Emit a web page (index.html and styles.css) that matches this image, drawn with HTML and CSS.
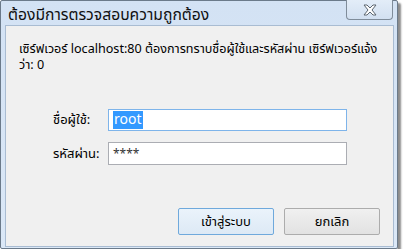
FILE: index.html
```html
<!DOCTYPE html>
<html lang="th">
<head>
    <meta charset="UTF-8">
    <title>ต้องมีการตรวจสอบความถูกต้อง</title>
    <link rel="stylesheet" href="styles.css">
</head>
<body>

    <!-- หน้าต่างขอรหัสผ่าน -->
    <div class="window">
        <div class="titlebar">
            <span class="title">ต้องมีการตรวจสอบความถูกต้อง</span>
            <button class="close-button">
                <svg width="16" height="12" viewBox="0 0 16 12">
                    <path d="M2 1 L5 1 L8 4 L11 1 L14 1 L10 6 L14 11 L11 11 L8 8 L5 11 L2 11 L6 6 Z" fill="#fff" stroke="#5c6670" stroke-width="1" stroke-linejoin="round"/>
                </svg>
            </button>
        </div>

        <div class="content">
            <p class="message">เซิร์ฟเวอร์ localhost:80 ต้องการทราบชื่อผู้ใช้และรหัสผ่าน เซิร์ฟเวอร์แจ้งว่า: 0</p>

            <div class="form">
                <div class="row">
                    <label class="label">ชื่อผู้ใช้:</label>
                    <div class="field focused"><span class="selected">root</span></div>
                </div>
                <div class="row">
                    <label class="label">รหัสผ่าน:</label>
                    <div class="field"><span class="stars">****</span></div>
                </div>
            </div>

            <div class="buttons">
                <button class="btn default">เข้าสู่ระบบ</button>
                <button class="btn">ยกเลิก</button>
            </div>
        </div>
    </div>

</body>
</html>
```

FILE: styles.css
```css
body {
    margin: 0;
    background: #ffffff;
    font-family: Tahoma, "Noto Sans Thai", "Noto Sans", sans-serif;
}

/* กรอบหน้าต่าง */
.window {
    width: 396px;
    height: 247px;
    border: 1px solid #6b7a8a;
    border-radius: 2px;
    background: linear-gradient(#d3e2f4, #dbe8f7);
    box-shadow: 3px 3px 2px rgba(0, 0, 0, 0.45);
    display: flex;
    flex-direction: column;
}

.titlebar {
    height: 24px;
    display: flex;
    align-items: flex-start;
    justify-content: space-between;
}

.title {
    font-size: 15.7px;
    color: #101010;
    padding: 2px 0 0 7px;
}

.close-button {
    width: 47px;
    height: 20px;
    margin: -1px 4px 0 0;
    border: 1px solid #7f8c9a;
    border-top: none;
    border-radius: 0 0 4px 4px;
    background: linear-gradient(#e3edf8, #d2e0f1);
    padding: 0;
    display: flex;
    align-items: center;
    justify-content: center;
}

.content {
    flex: 1;
    margin: 0 3px 1px 4px;
    border: 1px solid #a9bcd2;
    background: #f0f0f0;
    display: flex;
    flex-direction: column;
}

.message {
    margin: 16px 8px 0 13px;
    font-size: 12.6px;
    line-height: 16px;
    color: #000;
}

.form {
    margin-top: 35px;
    display: flex;
    flex-direction: column;
    gap: 11px;
}

.row {
    display: flex;
    align-items: center;
}

.label {
    width: 55px;
    padding-left: 47px;
    font-size: 13px;
    color: #000;
}

.field {
    border: 1px solid #abadb3;
    background: #fff;
    display: flex;
    align-items: center;
    padding-left: 4px;
    box-sizing: border-box;
    width: 239px;
    height: 23px;
    font-size: 14px;
}

.field.focused {
    border-color: #7eb4ea;
    height: 22px;
}

.selected {
    background: #3399ff;
    color: #fff;
    padding: 0 1px;
    line-height: 18px;
}

.stars {
    font-size: 12px;
    color: #333;
}

/* ปุ่ม */
.buttons {
    margin-top: auto;
    margin-bottom: 11px;
    padding-right: 13px;
    display: flex;
    justify-content: flex-end;
    gap: 10px;
}

.btn {
    width: 96px;
    height: 27px;
    border: 1px solid #acacac;
    border-radius: 2px;
    background: linear-gradient(#f0f0f0, #e2e2e2);
    font-family: Tahoma, "Noto Sans Thai", "Noto Sans", sans-serif;
    font-size: 13px;
    color: #000;
}

.btn.default {
    border-color: #6fa9dc;
    background: linear-gradient(#eaf3fb, #dde9f5);
}
```
